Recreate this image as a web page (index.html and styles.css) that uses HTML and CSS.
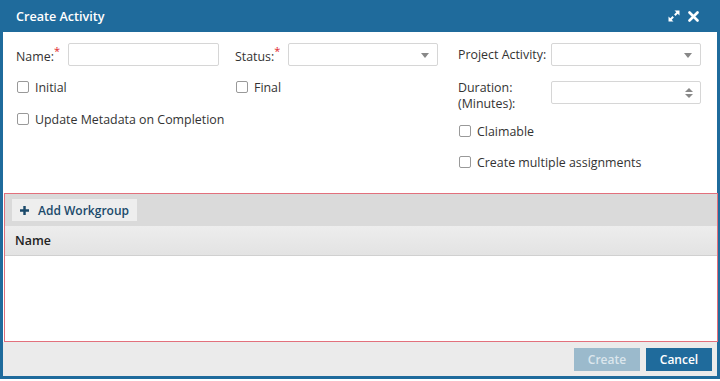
FILE: index.html
```html
<!DOCTYPE html>
<html lang="en">
<head>
  <meta charset="UTF-8" />
  <title>Create Activity</title>
  <link rel="stylesheet" href="styles.css">
</head>
<body>
  <div class="dialog">
    <div class="titlebar">
      <span class="title">Create Activity</span>
      <span class="tools">
        <svg width="12" height="12" viewBox="0 0 12 12">
          <path d="M6.5 0.5h5v5l-1.8-1.8-2.2 2.2-1.4-1.4 2.2-2.2z M5.5 11.5h-5v-5l1.8 1.8 2.2-2.2 1.4 1.4-2.2 2.2z" fill="#fff"/>
        </svg>
        <svg width="11" height="11" viewBox="0 0 11 11">
          <path d="M1.5 1.5l8 8M9.5 1.5l-8 8" stroke="#fff" stroke-width="2.6" stroke-linecap="round"/>
        </svg>
      </span>
    </div>

    <!-- formulario -->
    <div class="form">
      <div class="col">
        <div class="field">
          <label class="lbl w52">Name:<sup>*</sup></label>
          <input type="text" class="txt" />
        </div>
        <div class="check c1"><span class="box"></span>Initial</div>
        <div class="check c2"><span class="box"></span>Update Metadata on Completion</div>
      </div>
      <div class="col">
        <div class="field">
          <label class="lbl w53">Status:<sup>*</sup></label>
          <div class="txt sel"><span class="caret"></span></div>
        </div>
        <div class="check c1"><span class="box"></span>Final</div>
      </div>
      <div class="col last">
        <div class="field">
          <label class="lbl w93">Project Activity:</label>
          <div class="txt sel"><span class="caret"></span></div>
        </div>
        <div class="field dur">
          <label class="lbl w93 two">Duration:<br>(Minutes):</label>
          <div class="txt spin">
            <span class="up"></span>
            <span class="down"></span>
          </div>
        </div>
        <div class="check c3"><span class="box"></span>Claimable</div>
        <div class="check c4"><span class="box"></span>Create multiple assignments</div>
      </div>
    </div>

    <!-- grid de workgroups -->
    <div class="grid">
      <div class="toolbar">
        <button class="add">
          <svg width="11" height="11" viewBox="0 0 11 11">
            <path d="M4 0h3v4h4v3H7v4H4V7H0V4h4z" fill="#1b4a6b"/>
          </svg>
          Add Workgroup
        </button>
      </div>
      <div class="grid-head">Name</div>
      <div class="grid-body"></div>
    </div>

    <div class="footer">
      <button class="btn disabled">Create</button>
      <button class="btn primary">Cancel</button>
    </div>
  </div>
</body>
</html>
```

FILE: styles.css
```css
body {
  margin: 0;
  background-color: #fff;
  font-family: "Open Sans", Arial, sans-serif;
  font-size: 12.4px;
  color: #333;
}
.dialog {
  width: 720px;
  height: 379px;
  box-sizing: border-box;
  border: 3px solid #1f6b9c;
  border-top: none;
  display: flex;
  flex-direction: column;
  background-color: #fff;
}
.titlebar {
  height: 32px;
  margin: 0 -3px;
  background-color: #1f6b9c;
  display: flex;
  align-items: center;
  justify-content: space-between;
  padding: 0 21px 0 16px;
}
.title {
  color: #fff;
  font-weight: 600;
  font-size: 12.6px;
}
.tools {
  display: flex;
  gap: 8px;
  align-items: center;
}

/* formulario */
.form {
  height: 161px;
  box-sizing: border-box;
  padding: 11px 0 0 13px;
  display: grid;
  grid-template-columns: 203px 203px 247px;
  column-gap: 16px;
}
.col {
  display: flex;
  flex-direction: column;
  white-space: nowrap;
}
.col.last { margin-left: 4px; }
.field {
  display: flex;
  align-items: center;
  height: 23px;
}
.lbl {
  flex: none;
  white-space: nowrap;
}
.lbl sup {
  color: #e0262b;
  font-size: 11px;
  position: relative;
  top: -1px;
}
.w52 { width: 52px; }
.w53 { width: 53px; }
.w93 { width: 93px; }
.txt {
  flex: 1;
  height: 23px;
  box-sizing: border-box;
  border: 1px solid #d6d6d6;
  border-radius: 2px;
  background: #fff;
  position: relative;
  font: inherit;
  min-width: 0;
}
.caret {
  position: absolute;
  right: 8px;
  top: 9px;
  border-left: 4px solid transparent;
  border-right: 4px solid transparent;
  border-top: 5px solid #888;
}
.dur {
  margin-top: 14px;
  height: 32px;
  align-items: flex-start;
}
.dur .txt { margin-top: 1px; }
.two { line-height: 16px; }
.spin .up, .spin .down {
  position: absolute;
  right: 7px;
  border-left: 4px solid transparent;
  border-right: 4px solid transparent;
}
.spin .up { top: 6px; border-bottom: 4px solid #888; }
.spin .down { top: 12px; border-top: 4px solid #888; }

.check {
  display: flex;
  align-items: center;
  height: 20px;
}
.box {
  flex: none;
  width: 10px;
  height: 10px;
  border: 1px solid #999;
  border-radius: 2px;
  margin: 0 6px 0 1px;
  background: #fff;
}
.c1 { margin-top: 11px; }
.c2 { margin-top: 12px; }
.c3 { margin-top: 9px; }
.c4 { margin-top: 11px; }

/* grid */
.grid {
  flex: 1;
  margin: 0 -1px 0 1px;
  border: 1px solid #e2707c;
  display: flex;
  flex-direction: column;
}
.toolbar {
  height: 32px;
  background-color: #dadada;
  display: flex;
  align-items: center;
  padding-left: 7px;
}
.add {
  height: 22px;
  width: 125px;
  border: none;
  background-color: #eeeeee;
  display: flex;
  align-items: center;
  gap: 9px;
  padding: 0 8px;
  font-family: inherit;
  font-size: 12px;
  font-weight: 600;
  color: #1b4a6b;
  white-space: nowrap;
}
.grid-head {
  height: 30px;
  box-sizing: border-box;
  background: linear-gradient(#ededed, #e3e3e3);
  border-bottom: 1px solid #d0d0d0;
  display: flex;
  align-items: center;
  padding-left: 10px;
  font-weight: 600;
  color: #222;
}
.grid-body {
  flex: 1;
  background: #fff;
}

.footer {
  height: 34px;
  background-color: #ebebeb;
  display: flex;
  justify-content: flex-end;
  align-items: center;
  gap: 6px;
  padding-right: 5px;
}
.btn {
  width: 66px;
  height: 23px;
  border: none;
  font-family: inherit;
  font-size: 12px;
  font-weight: 600;
}
.disabled {
  background-color: #9bbacc;
  color: #dbe6ed;
}
.primary {
  background-color: #1f6b9c;
  color: #fff;
}
```
